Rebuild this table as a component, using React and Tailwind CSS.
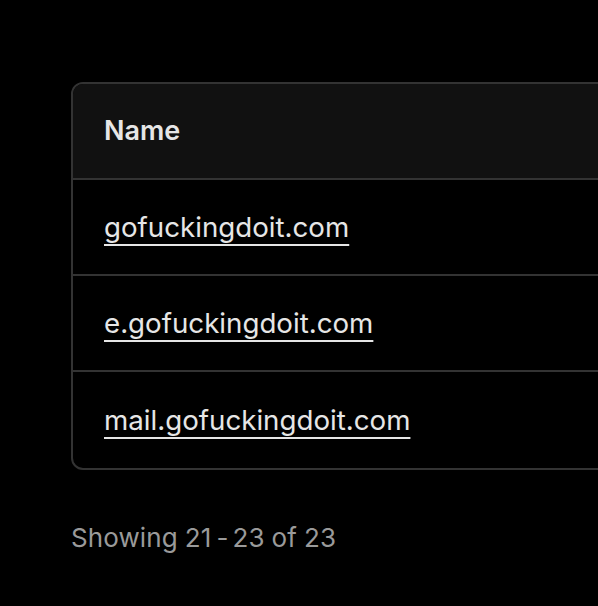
export default function App() {
  const rows = ["gofuckingdoit.com", "e.gofuckingdoit.com", "mail.gofuckingdoit.com"];
  return (
    <div className="w-[598px] h-[606px] overflow-hidden bg-black" style={{ fontFamily: "Inter, 'Noto Sans', sans-serif" }}>
      <div className="pl-[71px] pt-[82px]">
        <div className="w-[640px] rounded-[12px] border-2 border-[#333333] overflow-hidden">
          <div className="h-[96px] bg-[#111111] border-b-2 border-[#333333] flex items-center pl-[31px]">
            <span className="text-[27px] font-semibold text-[#e6e6e6]">Name</span>
          </div>
          {rows.map((r, i) => (
            <div key={r} className={`h-[96px] flex items-center pl-[31px] pt-[2px] ${i < rows.length - 1 ? "border-b-2 border-[#333333]" : ""}`}>
              <span className="text-[27.7px] text-[#e6e6e6] underline decoration-2 underline-offset-[7px] decoration-[#e6e6e6]">{r}</span>
            </div>
          ))}
        </div>
        <div className="mt-[48px] text-[26px] tracking-[0.1px] text-[#9a9a9a] flex items-center">
          <span className="mr-[7px]">Showing</span>
          <span>21</span>
          <span className="ml-[5px] mr-[4px]">-</span>
          <span className="mr-[7px]">23</span>
          <span className="mr-[7px]">of</span>
          <span>23</span>
        </div>
      </div>
    </div>
  );
}
